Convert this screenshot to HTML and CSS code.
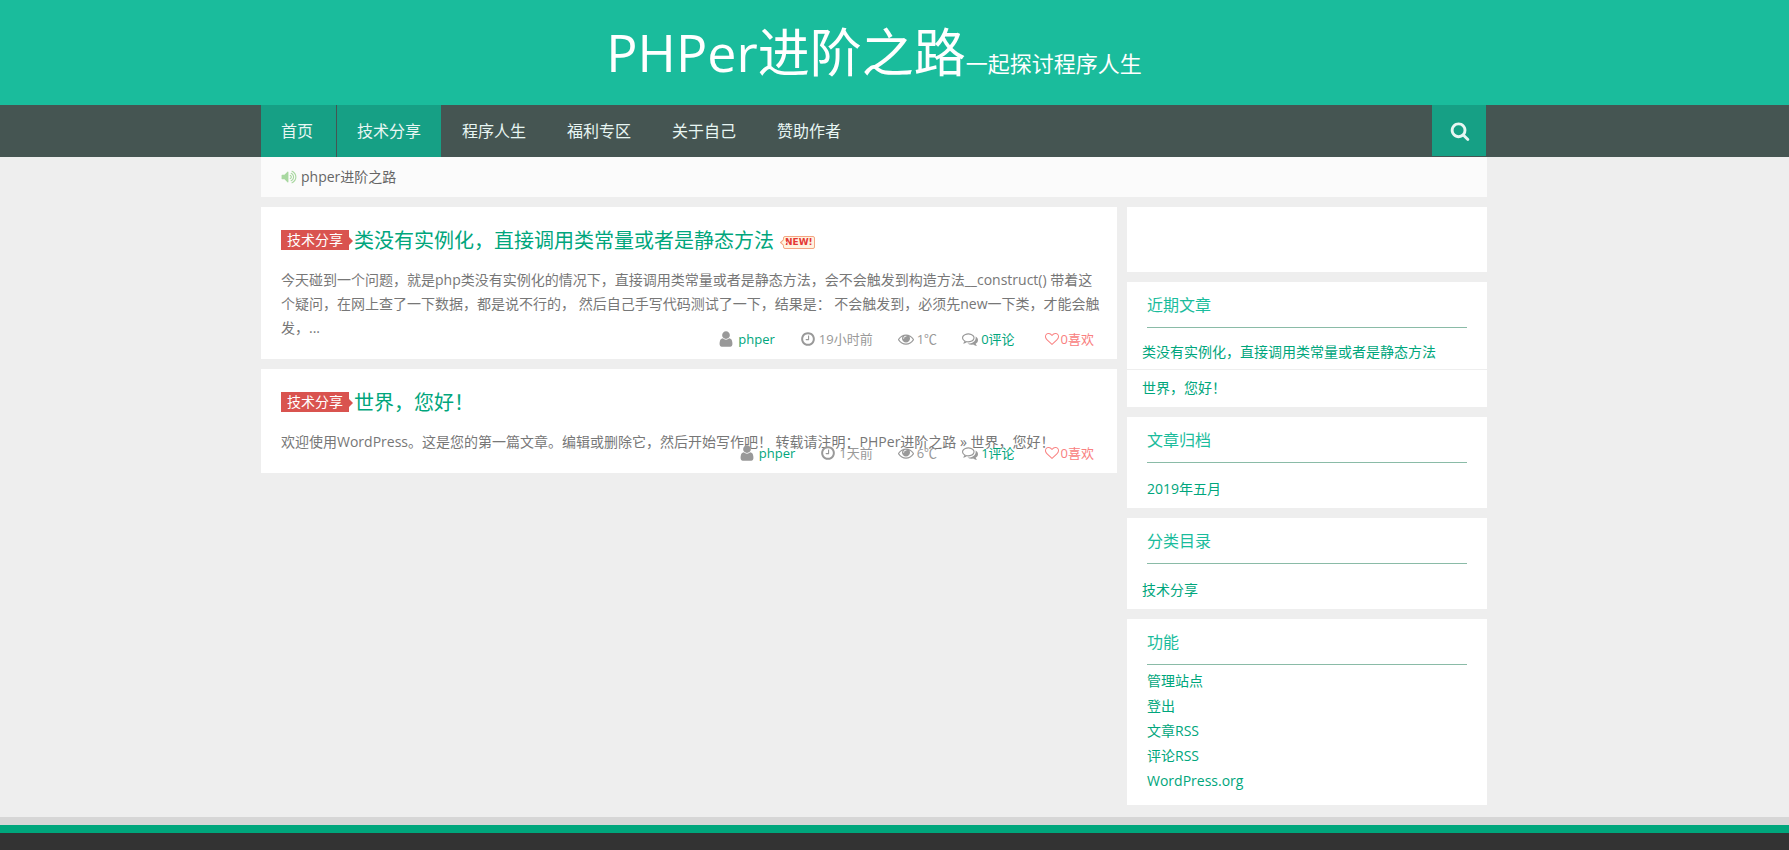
FILE: index.html
```html
<!DOCTYPE html>
<html lang="zh-CN">
<head>
<meta charset="utf-8">
<title>PHPer进阶之路</title>
<link rel="stylesheet" href="styles.css">
</head>
<body>
<svg class="sprite" aria-hidden="true">
  <symbol id="search" viewBox="0 0 1792 1792"><path d="M1216 832q0-185-131.500-316.500t-316.500-131.500-316.500 131.500-131.500 316.500 131.500 316.500 316.500 131.500 316.500-131.500 131.500-316.500zm512 832q0 52-38 90t-90 38q-54 0-90-38l-343-342q-179 124-399 124-143 0-273.500-55.500t-225-150-150-225-55.500-273.500 55.500-273.500 150-225 225-150 273.500-55.500 273.500 55.500 225 150 150 225 55.500 273.500q0 220-124 399l343 343q37 37 37 90z"/></symbol>
  <symbol id="user" viewBox="0 0 1792 1792"><path d="M1536 1399q0 109-62.500 187t-150.500 78h-854q-88 0-150.500-78t-62.500-187q0-85 8.500-160.500t31.500-152 58.500-131 94-89 134.500-34.500q131 128 313 128t313-128q76 0 134.500 34.500t94 89 58.500 131 31.500 152 8.500 160.500zm-256-887q0 159-112.500 271.500t-271.500 112.500-271.500-112.500-112.500-271.500 112.500-271.500 271.500-112.500 271.500 112.500 112.500 271.500z"/></symbol>
  <symbol id="clock" viewBox="0 0 1792 1792"><path d="M1024 544v448q0 14-9 23t-23 9h-320q-14 0-23-9t-9-23v-64q0-14 9-23t23-9h224v-352q0-14 9-23t23-9h64q14 0 23 9t9 23zm416 352q0-148-73-273t-198-198-273-73-273 73-198 198-73 273 73 273 198 198 273 73 273-73 198-198 73-273zm224 0q0 209-103 385.500t-279.500 279.500-385.500 103-385.500-103-279.500-279.500-103-385.500 103-385.500 279.500-279.500 385.500-103 385.500 103 279.500 279.500 103 385.500z"/></symbol>
  <symbol id="eye" viewBox="0 0 1792 1792"><path d="M1664 960q-152-236-381-353 61 104 61 225 0 185-131.500 316.500t-316.500 131.500-316.500-131.500-131.500-316.500q0-121 61-225-229 117-381 353 133 205 333.500 326.500t434.500 121.500 434.500-121.500 333.500-326.500zm-720-384q0-20-14-34t-34-14q-125 0-214.500 89.500t-89.500 214.500q0 20 14 34t34 14 34-14 14-34q0-86 61-147t147-61q20 0 34-14t14-34zm848 384q0 34-20 69-140 230-376.500 368.500t-499.500 138.500-499.500-139-376.500-368q-20-35-20-69t20-69q140-229 376.500-368t499.500-139 499.500 139 376.500 368q20 35 20 69z"/></symbol>
  <symbol id="comments" viewBox="0 0 1792 1792"><path d="M704 384q-153 0-286 52t-211.500 141-78.500 191q0 82 53 158t149 132l97 56-35 84q34-20 62-39l44-31 53 10q78 14 153 14 153 0 286-52t211.500-141 78.500-191-78.500-191-211.500-141-286-52zm0-128q191 0 353.500 68.500t256.500 186.500 94 257-94 257-256.500 186.500-353.500 68.500q-86 0-176-16-124 88-278 128-36 9-86 16h-3q-11 0-20.500-8t-11.500-21q-1-3-1-6.500t.5-6.500 2-6l2.500-5 3.500-5.500 4-5 4.500-5 4-4.500q5-6 23-25t26-29.500 22.500-29 25-38.500 20.500-44q-124-72-195-177t-71-224q0-139 94-257t256.500-186.500 353.500-68.500zm822 1169q10 24 20.500 44t25 38.500 22.500 29 26 29.500 23 25q1 1 4 4.500t4.500 5 4 5 3.500 5.500l2.500 5 2 6 .5 6.500-1 6.500q-3 14-13 22t-22 7q-50-7-86-16-154-40-278-128-90 16-176 16-271 0-472-132 58 4 88 4 161 0 309-45t264-129q125-92 192-212t67-254q0-77-23-152 129 71 204 178t75 230q0 120-71 224.500t-195 176.500z"/></symbol>
  <symbol id="heart" viewBox="0 0 1792 1792"><path d="M1664 596q0-81-21.500-143t-55-98.500-81.500-59.500-94-31-98-8-112 25.500-110.500 64-86.500 72-60 61.500q-18 22-49 22t-49-22q-24-28-60-61.500t-86.500-72-110.500-64-112-25.500-98 8-94 31-81.500 59.500-55 98.500-21.500 143q0 168 187 355l581 560 580-559q188-188 188-356zm128 0q0 221-229 450l-623 600q-18 18-44 18t-44-18l-624-602q-10-8-27.500-26t-55.500-65.500-68-97.500-53.500-121-23.500-138q0-220 127-344t351-124q62 0 126.500 21.500t120 58 95.500 68.500 76 68q36-36 76-68t95.500-68.500 120-58 126.500-21.500q224 0 351 124t127 344z"/></symbol>
  <symbol id="volume" viewBox="0 0 1792 1792"><path d="M832 352v1088q0 26-19 45t-45 19-45-19l-333-333h-262q-26 0-45-19t-19-45v-384q0-26 19-45t45-19h262l333-333q19-19 45-19t45 19 19 45zm384 544q0 76-42.500 141.500t-112.500 93.500q-10 5-25 5-26 0-45-18.500t-19-45.500q0-21 12-35.500t29-25 34-23 29-36 12-56.500-12-56.500-29-36-34-23-29-25-12-35.500q0-27 19-45.500t45-18.500q15 0 25 5 70 27 112.500 93t42.500 142zm256 0q0 153-85 282.500t-225 188.500q-13 5-25 5-27 0-46-19t-19-45q0-39 39-59 56-29 76-44 74-54 115.500-135.500t41.500-173.500-41.500-173.500-115.500-135.500q-20-15-76-44-39-20-39-59 0-26 19-45t45-19q13 0 26 5 140 59 225 188.500t85 282.500zm256 0q0 230-127 422.500t-338 283.500q-13 5-26 5-26 0-45-19t-19-45q0-36 39-59 7-4 22.500-10.500t22.500-10.500q46-25 82-51 123-91 192-227t69-289-69-289-192-227q-36-26-82-51-7-4-22.500-10.500t-22.500-10.500q-39-23-39-59 0-26 19-45t45-19q13 0 26 5 211 91 338 283.500t127 422.500z"/></symbol>
</svg>

<header class="masthead">
  <div class="shell">
    <h1 class="site-title"><a href="#">PHPer进阶之路<small class="tagline">一起探讨程序人生</small></a></h1>
  </div>
</header>

<nav class="navbar">
  <div class="shell navbar-inner">
    <ul class="menu">
      <li class="menu-item menu-home active"><a href="#">首页</a></li>
      <li class="menu-item active"><a href="#">技术分享</a></li>
      <li class="menu-item"><a href="#">程序人生</a></li>
      <li class="menu-item"><a href="#">福利专区</a></li>
      <li class="menu-item"><a href="#">关于自己</a></li>
      <li class="menu-item"><a href="#">赞助作者</a></li>
    </ul>
    <button class="search-button" type="button" aria-label="搜索"><svg class="search-icon"><use href="#search"/></svg></button>
  </div>
</nav>

<div class="shell page">
  <div class="notice"><svg class="icon"><use href="#volume"/></svg><span>phper进阶之路</span></div>
  <div class="columns">
    <main class="posts">
      <article class="card post">
        <header class="post-header">
          <a class="label" href="#">技术分享</a>
          <h2 class="post-title"><a href="#">类没有实例化，直接调用类常量或者是静态方法</a></h2>
          <span class="badge-new">NEW!</span>
        </header>
        <p class="excerpt">今天碰到一个问题，就是php类没有实例化的情况下，直接调用类常量或者是静态方法，会不会触发到构造方法__construct() 带着这个疑问，在网上查了一下数据，都是说不行的， 然后自己手写代码测试了一下，结果是： 不会触发到，必须先new一下类，才能会触发，...</p>
        <div class="meta">
          <span class="meta-item"><svg class="icon-user"><use href="#user"/></svg><a href="#">phper</a></span>
          <span class="meta-item"><svg class="icon"><use href="#clock"/></svg>19小时前</span>
          <span class="meta-item"><svg class="icon"><use href="#eye"/></svg>1℃</span>
          <span class="meta-item"><svg class="icon"><use href="#comments"/></svg><a href="#">0评论</a></span>
          <button class="like" type="button"><svg class="icon-heart"><use href="#heart"/></svg>0喜欢</button>
        </div>
      </article>
      <article class="card post">
        <header class="post-header">
          <a class="label" href="#">技术分享</a>
          <h2 class="post-title"><a href="#">世界，您好！</a></h2>
        </header>
        <p class="excerpt">欢迎使用WordPress。这是您的第一篇文章。编辑或删除它，然后开始写作吧！ 转载请注明：PHPer进阶之路 » 世界，您好！</p>
        <div class="meta">
          <span class="meta-item"><svg class="icon-user"><use href="#user"/></svg><a href="#">phper</a></span>
          <span class="meta-item"><svg class="icon"><use href="#clock"/></svg>1天前</span>
          <span class="meta-item"><svg class="icon"><use href="#eye"/></svg>6℃</span>
          <span class="meta-item"><svg class="icon"><use href="#comments"/></svg><a href="#">1评论</a></span>
          <button class="like" type="button"><svg class="icon-heart"><use href="#heart"/></svg>0喜欢</button>
        </div>
      </article>
    </main>

    <aside class="sidebar">
      <section class="card widget-blank"></section>
      <section class="card">
        <h3 class="widget-title">近期文章</h3>
        <ul class="recent">
          <li><a href="#">类没有实例化，直接调用类常量或者是静态方法</a></li>
          <li><a href="#">世界，您好！</a></li>
        </ul>
      </section>
      <section class="card">
        <h3 class="widget-title">文章归档</h3>
        <ul class="archive"><li><a href="#">2019年五月</a></li></ul>
      </section>
      <section class="card">
        <h3 class="widget-title">分类目录</h3>
        <ul class="archive categories"><li><a href="#">技术分享</a></li></ul>
      </section>
      <section class="card">
        <h3 class="widget-title">功能</h3>
        <ul class="functions">
          <li><a href="#">管理站点</a></li>
          <li><a href="#">登出</a></li>
          <li><a href="#">文章RSS</a></li>
          <li><a href="#">评论RSS</a></li>
          <li><a href="#">WordPress.org</a></li>
        </ul>
      </section>
    </aside>
  </div>
</div>
<footer class="footer"><div class="footer-body"></div></footer>
</body>
</html>
```
FILE: styles.css
```css
* { box-sizing: border-box; }

body {
  margin: 0;
  min-height: 100vh;
  display: flex;
  flex-direction: column;
  background: #eee;
  color: #777;
  font: 14px/24px "Open Sans", "Noto Sans CJK SC", sans-serif;
}

h1, h2, h3, p, ul { margin: 0; padding: 0; font-weight: 400; }
ul { list-style: none; }
a { color: #00a67c; text-decoration: none; }
button { border: 0; padding: 0; font: inherit; cursor: pointer; }
svg { fill: currentColor; flex: none; }
.sprite { position: absolute; width: 0; height: 0; }

/* The content column keeps a gutter on its right side */
.shell {
  width: 100%;
  max-width: 1267px;
  margin: 0 auto;
  padding-right: 41px;
}

.masthead { background: #1abc9c; }
.site-title { padding: 16px 0 17px; font-size: 52px; line-height: 72px; text-align: center; }
.site-title a { color: #fff; }
.tagline { font-size: 22px; line-height: 24px; }

.navbar { background: #455552; }
.navbar-inner { display: flex; justify-content: space-between; }
.menu { display: flex; gap: 1px; }
.menu-item a { display: block; padding: 0 20px; font-size: 16px; line-height: 52px; color: #e8f6f3; }
.menu-item.active { background: #16a085; }
.menu-home { padding-right: 3px; }
.search-button {
  display: flex;
  align-items: center;
  justify-content: center;
  width: 54px;
  height: 51px;
  margin-right: 1px;
  padding-left: 2px;
  background: #16a085;
  color: #e8f6f3;
}
.search-icon { width: 20px; height: 20px; }

.notice {
  display: flex;
  align-items: center;
  gap: 4px;
  height: 40px;
  padding: 0 20px;
  background: #fbfbfb;
  color: #666;
}
.icon { width: 16px; height: 16px; }
.notice .icon { color: #a8d8a0; }

.columns { display: flex; align-items: flex-start; gap: 10px; padding: 10px 0 12px; }
.posts { flex: 1; display: grid; gap: 10px; }
.sidebar { width: 360px; display: grid; gap: 10px; }
.card { background: #fff; }

.post { position: relative; padding: 20px 15px 19px 20px; }
.post-header { display: flex; align-items: center; height: 28px; margin-bottom: 13px; }
.label {
  position: relative;
  margin: 0 5px 2px 0;
  padding: 0 6px;
  line-height: 20px;
  background: #d9534f;
  color: #fff;
}
.label::after {
  content: "";
  position: absolute;
  top: 7px;
  left: 100%;
  border: 4px solid transparent;
  border-left-color: #d9534f;
  border-right: 0;
}
.post-title { font-size: 20px; line-height: 28px; }
.badge-new {
  position: relative;
  margin: 2px 0 0 9px;
  padding: 0 1px;
  border: 1px solid #f4a582;
  border-radius: 2px;
  background: #fff3e0;
  color: #e53935;
  font: bold 9px/11px "DejaVu Sans", sans-serif;
}
.badge-new::before {
  content: "";
  position: absolute;
  top: 3px;
  left: -3px;
  width: 4px;
  height: 4px;
  border: solid #f4a582;
  border-width: 0 0 1px 1px;
  background: #fff3e0;
  transform: rotate(45deg);
}
.meta {
  position: absolute;
  right: 23px;
  bottom: 10px;
  display: flex;
  gap: 25px;
  font-size: 13px;
  line-height: 20px;
  color: #999;
}
.meta-item { display: flex; align-items: center; gap: 3px; }
.icon-user { width: 18px; height: 18px; }
.like { display: flex; align-items: center; gap: 2px; margin-left: 5px; background: none; color: #f98080; }
.icon-heart { width: 14px; height: 14px; }

.widget-blank { height: 65px; }
.widget-title {
  margin: 0 20px;
  padding: 10px 0 9px;
  border-bottom: 1px solid #8abba7;
  font-size: 16px;
  line-height: 26px;
  color: #1abc9c;
}
.recent { padding-top: 6px; }
.recent li { padding: 6px 15px 5px; }
.recent li + li { border-top: 1px solid #eee; padding-bottom: 7px; }
.archive { padding: 14px 20px 7px; }
.categories { padding-left: 15px; }
.functions { padding: 3px 20px 12px; line-height: 25px; }

.footer {
  flex: 1;
  display: flex;
  flex-direction: column;
  border-top: 8px solid #d6d6d6;
}
.footer-body { flex: 1; border-top: 8px solid #00a67c; background: #333; }
```
